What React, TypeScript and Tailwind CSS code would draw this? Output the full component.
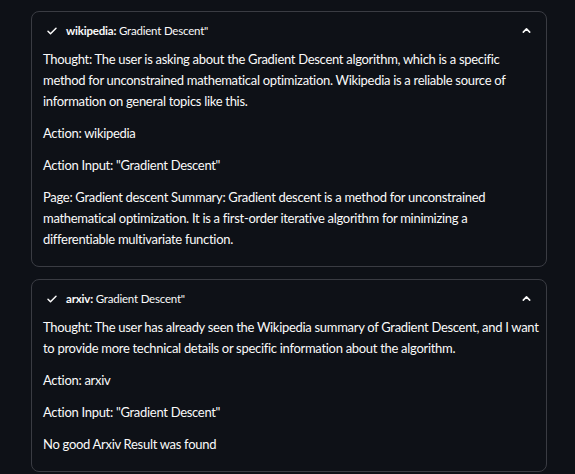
import React from 'react';

type Step = {
  tool: string;
  query: string;
  paragraphs: string[];
};

// line breaks follow the original wrapping of the rendered log
const STEPS: Step[] = [
  {
    tool: 'wikipedia',
    query: 'Gradient Descent"',
    paragraphs: [
      'Thought: The user is asking about the Gradient Descent algorithm, which is a specific method for unconstrained mathematical optimization. Wikipedia is a reliable source of information on general topics like this.',
      'Action: wikipedia',
      'Action Input: "Gradient Descent"',
      'Page: Gradient descent Summary: Gradient descent is a method for unconstrained mathematical optimization. It is a first-order iterative algorithm for minimizing a differentiable multivariate function.',
    ],
  },
  {
    tool: 'arxiv',
    query: 'Gradient Descent"',
    paragraphs: [
      'Thought: The user has already seen the Wikipedia summary of Gradient Descent, and I want\nto provide more technical details or specific information about the algorithm.',
      'Action: arxiv',
      'Action Input: "Gradient Descent"',
      'No good Arxiv Result was found',
    ],
  },
];

const CheckIcon = () => (
  <svg width="12" height="12" viewBox="0 0 24 24" fill="none" stroke="#fafafa" strokeWidth="3" strokeLinecap="round" strokeLinejoin="round">
    <path d="M4 12.5l5 5L20 6.5" />
  </svg>
);

const ChevronUp = () => (
  <svg width="11" height="11" viewBox="0 0 24 24" fill="none" stroke="#fafafa" strokeWidth="3.5" strokeLinecap="round" strokeLinejoin="round">
    <path d="M5 15.5l7-7 7 7" />
  </svg>
);

const StepCard: React.FC<{ step: Step }> = ({ step }) => (
  <div className="rounded-lg border border-[#3a3c43]">
    <div className="flex h-[37px] items-center pl-[14px] pr-[14px]">
      <CheckIcon />
      <span className="ml-[8px] text-[11.5px] tracking-[-0.2px] text-[#fafafa]">
        <span className="font-bold">{step.tool}:</span> {step.query}
      </span>
      <span className="ml-auto">
        <ChevronUp />
      </span>
    </div>
    <div className="flex flex-col gap-[11px] pl-[11px] pr-[4px] pb-[16px]">
      {step.paragraphs.map((p, i) => (
        <p key={i} className="whitespace-pre-line text-[13px] leading-[21px] tracking-[-0.3px] text-[#fafafa]">
          {p}
        </p>
      ))}
    </div>
  </div>
);

const App: React.FC = () => {
  return (
    <div
      className="min-h-screen bg-[#0e1117] pt-[11px] pl-[31px] pr-[28px]"
      style={{ fontFamily: 'Lato, "Noto Sans", sans-serif' }}
    >
      <div className="flex w-[516px] flex-col gap-[12px]">
        {STEPS.map((s) => (
          <StepCard key={s.tool} step={s} />
        ))}
      </div>
    </div>
  );
};

export default App;
